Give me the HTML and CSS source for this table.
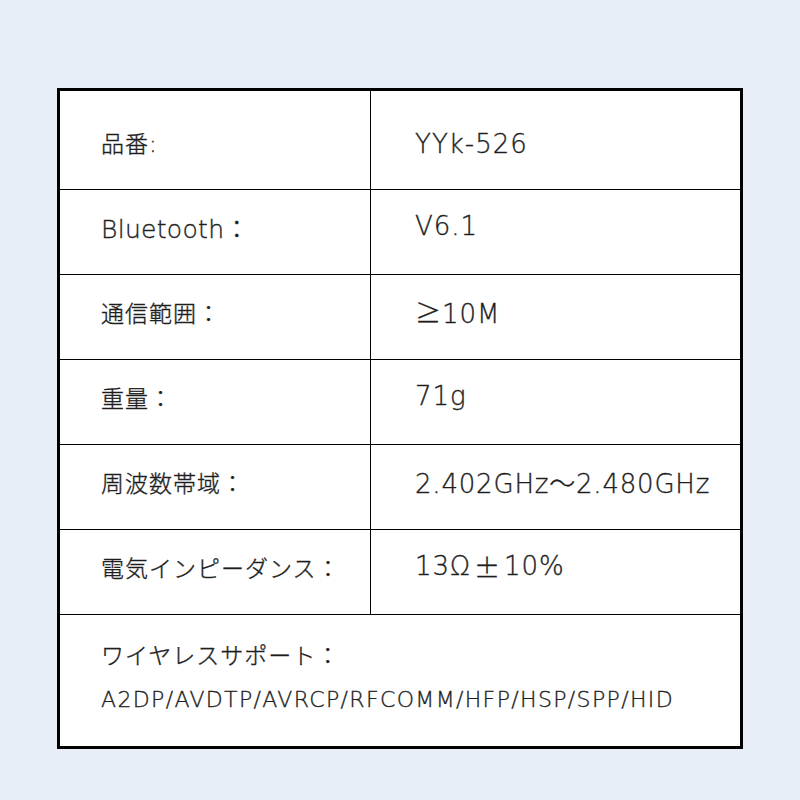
FILE: index.html
```html
<!DOCTYPE html>
<html lang="ja">
<head>
<meta charset="utf-8">
<title>Spec</title>
<link rel="stylesheet" href="styles.css">
</head>
<body>
<div class="spec">
  <div class="row row-first">
    <div class="key">品番:</div>
    <div class="val">YYk-526</div>
  </div>
  <div class="row">
    <div class="key key-latin">Bluetooth：</div>
    <div class="val">V6.1</div>
  </div>
  <div class="row">
    <div class="key">通信範囲：</div>
    <div class="val">≥10M</div>
  </div>
  <div class="row">
    <div class="key">重量：</div>
    <div class="val">71g</div>
  </div>
  <div class="row">
    <div class="key">周波数帯域：</div>
    <div class="val val-long">2.402GHz～2.480GHz</div>
  </div>
  <div class="row">
    <div class="key">電気インピーダンス：</div>
    <div class="val">13Ω<span class="cjk">±</span>10%</div>
  </div>
  <div class="full">
    <div class="key">ワイヤレスサポート：</div>
    <div class="proto">A2DP/AVDTP/AVRCP/RFCOMM/HFP/HSP/SPP/HID</div>
  </div>
</div>
</body>
</html>
```
FILE: styles.css
```css
html, body {
  margin: 0;
  padding: 0;
}
body {
  background: #e7eef6;
  width: 800px;
  height: 800px;
  font-family: "DejaVu Sans", "Noto Sans CJK JP", sans-serif;
  font-weight: 300;
  color: #1e1e1e;
  -webkit-text-stroke: 0.35px #1e1e1e;
  padding-top: 88px;
  padding-left: 57px;
  box-sizing: border-box;
}
.spec {
  width: 686px;
  height: 661px;
  box-sizing: border-box;
  border: 3px solid #000;
  background: #fff;
  display: flex;
  flex-direction: column;
}
.row {
  display: grid;
  grid-template-columns: 310px 1fr;
  height: 85px;
  box-sizing: border-box;
  border-bottom: 1px solid #000;
}
.key {
  font-size: 23px;
  letter-spacing: 1px;
  padding-left: 41px;
  display: flex;
  align-items: center;
  padding-bottom: 10px;
}
.key-latin {
  font-size: 25px;
  letter-spacing: 0.3px;
}
.val {
  border-left: 1px solid #000;
  font-size: 26px;
  letter-spacing: 1px;
  padding-left: 44px;
  display: flex;
  align-items: center;
  padding-bottom: 12px;
}
.val-long {
  letter-spacing: 0.8px;
}
.cjk {
  font-family: "Noto Sans CJK JP", sans-serif;
  margin: 0 3px;
}
.row-first {
  height: 99px;
}
.row-first .key {
  padding-bottom: 0;
  padding-top: 4px;
}
.row-first .val {
  padding-bottom: 0;
  padding-top: 7px;
}
.full {
  flex: 1;
  display: flex;
  flex-direction: column;
  padding-top: 24px;
}
.full .key {
  padding-bottom: 0;
  height: 30px;
}
.proto {
  padding-left: 41px;
  font-size: 22px;
  letter-spacing: 1.35px;
  margin-top: 18px;
}
```
